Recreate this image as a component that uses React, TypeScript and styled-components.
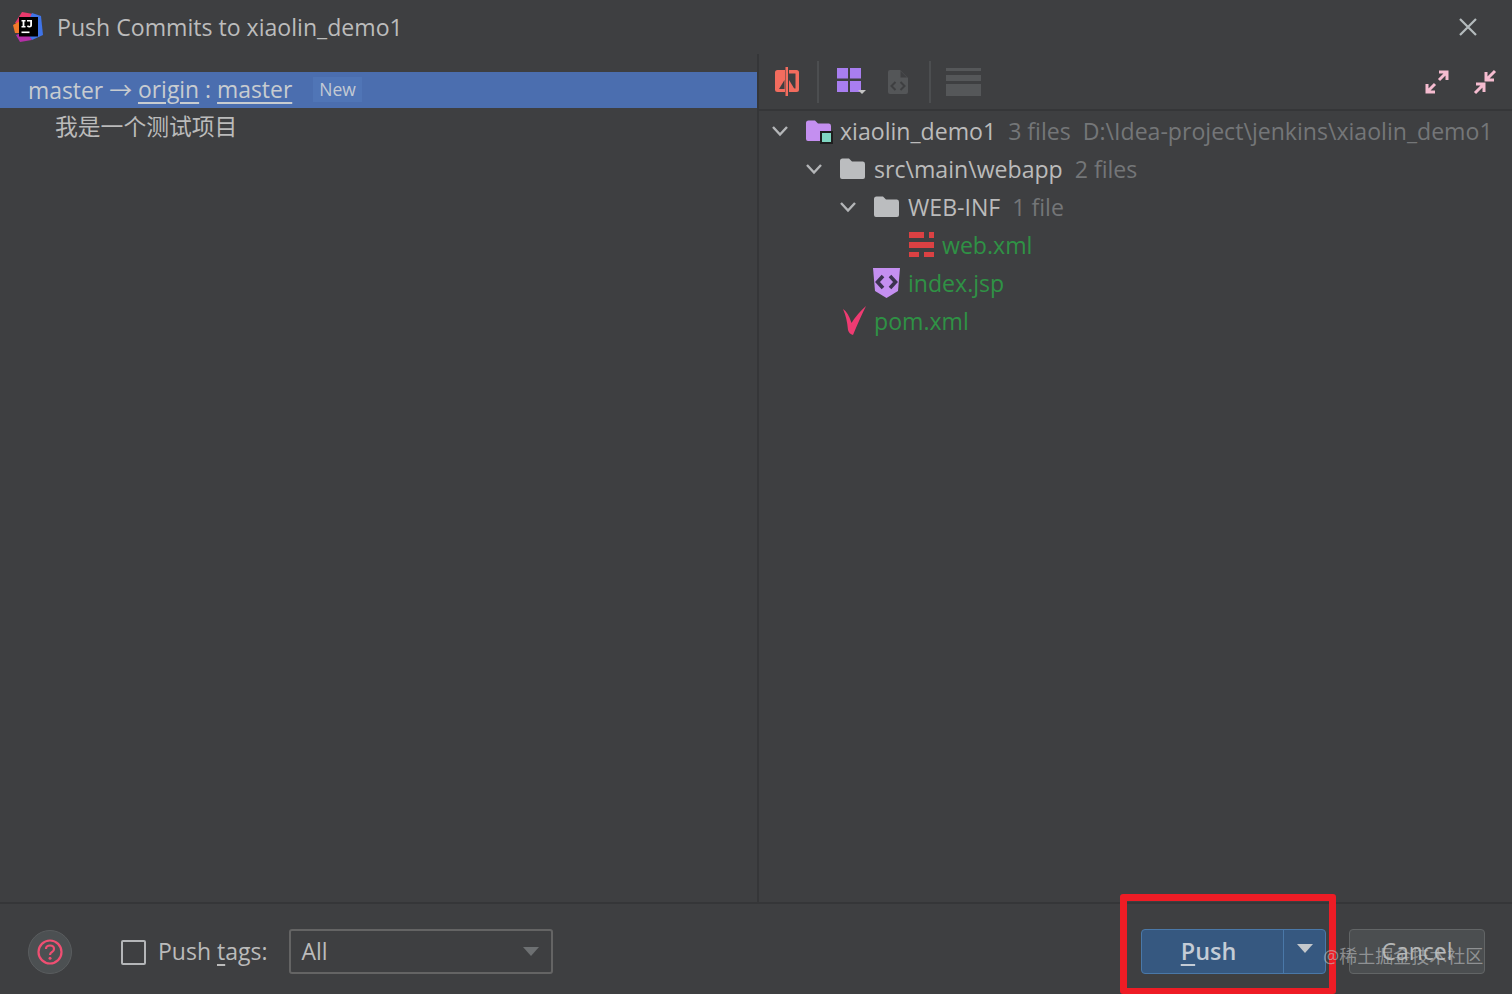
import React from "react";
import styled, { createGlobalStyle } from "styled-components";

const Global = createGlobalStyle`
  html, body { margin: 0; padding: 0; background: #3e3f41; }
  #root { width: 1512px; height: 994px; overflow: hidden; }
`;

const FONT = `"Open Sans", "Noto Sans CJK SC", sans-serif`;

const Dialog = styled.div`
  position: relative;
  width: 1512px;
  height: 994px;
  display: flex;
  flex-direction: column;
  background: #3e3f41;
  color: #bbbbbb;
  font-family: ${FONT};
  font-size: 23px;
  overflow: hidden;
`;

const TitleBar = styled.div`
  height: 54px;
  flex: none;
  display: flex;
  align-items: center;
  padding: 0 34px 0 12px;
  gap: 13px;
`;

const Title = styled.div`
  flex: 1;
  font-size: 23.1px;
  color: #bcbcbc;
  line-height: 54px;
`;

const Main = styled.div`
  flex: 1;
  min-height: 0;
  display: flex;
`;

const LeftPane = styled.div`
  width: 757px;
  flex: none;
  padding-top: 18px;
  border-right: 2px solid #353638;
`;

const BranchRow = styled.div`
  height: 36px;
  box-sizing: border-box;
  padding: 0 0 2px 28px;
  background: #4b6eaf;
  display: flex;
  align-items: center;
  color: #c8ccd0;
  font-size: 22.9px;
  white-space: pre;
`;

const Link = styled.span`
  text-decoration: underline;
  text-decoration-thickness: 2px;
  text-underline-offset: 4px;
`;

const Badge = styled.span`
  margin-left: 21px;
  padding: 0 6px;
  height: 25px;
  line-height: 25px;
  font-size: 17.5px;
  color: #c3cad4;
  background: #5075b6;
`;

const CommitRow = styled.div`
  height: 36px;
  box-sizing: border-box;
  padding: 0 0 2px 55px;
  display: flex;
  align-items: center;
  font-size: 22.8px;
  color: #bbbbbb;
`;

const RightPane = styled.div`
  flex: 1;
  min-width: 0;
  display: flex;
  flex-direction: column;
`;

const Toolbar = styled.div`
  height: 57px;
  flex: none;
  border-bottom: 2px solid #353638;
  box-sizing: border-box;
  display: flex;
  align-items: center;
  padding: 0 13px 0 15px;
`;

const ToolIcon = styled.span<{ $mr?: number }>`
  display: inline-flex;
  margin-right: ${(p) => p.$mr ?? 0}px;
`;

const ToolSep = styled.span<{ $mr: number }>`
  width: 2px;
  height: 42px;
  background: #4c4e50;
  margin-right: ${(p) => p.$mr}px;
`;

const Spacer = styled.span`
  flex: 1;
`;

const Tree = styled.div`
  padding-top: 1px;
`;

const TreeRow = styled.div<{ $indent: number }>`
  height: 38px;
  display: flex;
  align-items: center;
  padding-left: ${(p) => p.$indent}px;
  white-space: nowrap;
`;

const Chevron = styled.span`
  display: inline-flex;
  width: 34px;
  flex: none;
`;

const NodeIcon = styled.span<{ $w?: number }>`
  display: inline-flex;
  width: ${(p) => p.$w ?? 35}px;
  flex: none;
  justify-content: flex-start;
`;

const Name = styled.span<{ $added?: boolean }>`
  color: ${(p) => (p.$added ? "#2f9245" : "#bbbbbb")};
  font-size: 23.1px;
`;

const Meta = styled.span`
  color: #747678;
  font-size: 23.1px;
  margin-left: 12px;
`;

const Footer = styled.div`
  height: 92px;
  flex: none;
  box-sizing: border-box;
  border-top: 2px solid #353638;
  display: flex;
  align-items: center;
  padding: 4px 27px 0 28px;
`;

const HelpButton = styled.span`
  width: 42px;
  height: 42px;
  border-radius: 50%;
  background: #4c5052;
  border: 1px solid #5a5d5f;
  display: flex;
  align-items: center;
  justify-content: center;
  margin: 2px 49px 0 0;
`;

const CheckBox = styled.span`
  width: 21px;
  height: 21px;
  border: 2px solid #b4b6b8;
  border-radius: 2px;
  margin: 2px 12px 0 0;
  flex: none;
`;

const TagsLabel = styled.span`
  font-size: 23px;
  color: #bbbbbb;
  margin-right: 22px;
`;

const U = styled.span`
  text-decoration: underline;
  text-underline-offset: 4px;
`;

const Select = styled.div`
  width: 264px;
  height: 45px;
  box-sizing: border-box;
  border: 2px solid #646464;
  border-radius: 3px;
  display: flex;
  align-items: center;
  justify-content: space-between;
  padding: 0 12px 0 10px;
  font-size: 23px;
  color: #bbbbbb;
`;

const Caret = styled.span<{ $color: string }>`
  width: 0;
  height: 0;
  border-left: 8px solid transparent;
  border-right: 8px solid transparent;
  border-top: 9px solid ${(p) => p.$color};
`;

const SplitButton = styled.div`
  width: 185px;
  height: 45px;
  box-sizing: border-box;
  border: 1px solid #4a78a8;
  border-radius: 4px;
  background: #365880;
  display: flex;
  color: #c4ccd6;
  margin-right: 23px;
`;

const PushPart = styled.span`
  flex: 1;
  display: flex;
  align-items: center;
  justify-content: center;
  font-weight: 600;
  font-size: 23.4px;
  border-right: 1px solid #4a78a8;
  padding-right: 8px;
`;

const CaretPart = styled.span`
  width: 41px;
  display: flex;
  align-items: center;
  justify-content: center;
  padding-bottom: 6px;
`;

const CancelButton = styled.div`
  width: 136px;
  height: 45px;
  box-sizing: border-box;
  border: 1px solid #626566;
  border-radius: 4px;
  background: #4b4e50;
  color: #b4b6b6;
  display: flex;
  align-items: center;
  justify-content: center;
  font-size: 23px;
`;

const Highlight = styled.div`
  position: absolute;
  left: 1120px;
  top: 894px;
  width: 216px;
  height: 100px;
  box-sizing: border-box;
  border: 7px solid #ee1c25;
  border-bottom-width: 6px;
  border-radius: 3px;
`;

const Watermark = styled.div`
  position: absolute;
  left: 1323px;
  top: 944px;
  font-size: 18px;
  line-height: 24px;
  color: rgba(190, 192, 194, 0.62);
  white-space: nowrap;
`;

const AppLogo = () => (
  <svg width="32" height="32" viewBox="0 0 32 32">
    <path d="M10 1 L21 3 L18 14 L3 12 Z" fill="#e8396b" />
    <path d="M1 14 L8 10 L10 22 L3 22 Z" fill="#f27a2a" />
    <path d="M20 2 L29 5 L31 24 L20 29 L12 20 Z" fill="#3f74e8" />
    <path d="M4 24 L14 20 L20 29 L8 31 Z" fill="#b42fa6" />
    <rect x="7" y="6" width="19" height="19.5" fill="#000" />
    <path d="M9.5 9 H13.5 V10.5 H12.4 V15 H13.5 V16.5 H9.5 V15 H10.6 V10.5 H9.5 Z" fill="#fff" />
    <path d="M15 9 H20 V14.5 Q20 16.6 17.5 16.6 Q15.6 16.6 14.8 15.2 L16 14.2 Q16.6 15 17.4 15 Q18.2 15 18.2 14.2 V10.5 H15 Z" fill="#fff" />
    <rect x="9.5" y="20.5" width="8" height="1.6" fill="#fff" />
  </svg>
);

const CloseIcon = () => (
  <svg width="20" height="20" viewBox="0 0 20 20">
    <path d="M2 2 L18 18 M18 2 L2 18" stroke="#b4bbbd" strokeWidth="2.2" fill="none" />
  </svg>
);

const CompareIcon = () => (
  <svg width="26" height="30" viewBox="0 0 26 30">
    <path d="M11 3 H3.5 Q1 3 1 5.5 V22.5 Q1 25 3.5 25 H11 Z" fill="#f26c5e" />
    <path d="M15 3 H22.5 Q25 3 25 5.5 V22.5 Q25 25 22.5 25 H15 V21.5 H21.5 V6.5 H15 Z" fill="#f26c5e" />
    <rect x="11.5" y="0" width="2.5" height="29" fill="#f26c5e" />
    <path d="M10.5 13 L5 22 H10.5 Z" fill="#3e3f41" />
    <path d="M15 13 L20.5 22 H15 Z" fill="#f26c5e" />
  </svg>
);

const GridIcon = () => (
  <svg width="30" height="28" viewBox="0 0 30 28">
    <rect x="0" y="0" width="11" height="10.5" fill="#a87ef0" />
    <rect x="13" y="0" width="11" height="10.5" fill="#a87ef0" />
    <rect x="0" y="13" width="11" height="11" fill="#a87ef0" />
    <rect x="13" y="13" width="11" height="11" fill="#a87ef0" />
    <path d="M21 22 H29 L25 26 Z" fill="#c4c4c4" />
  </svg>
);

const FileCodeIcon = () => (
  <svg width="22" height="26" viewBox="0 0 22 26">
    <path d="M1 3 Q1 1 3 1 H13 L21 9 V23 Q21 25 19 25 H3 Q1 25 1 23 Z" fill="#545658" />
    <path d="M13.5 2 V8.5 H20 Z" fill="#3e3f41" />
    <path d="M8.5 13 L4.5 17 L8.5 21 M13.5 13 L17.5 17 L13.5 21" stroke="#3e3f41" strokeWidth="2" fill="none" />
  </svg>
);

const RowsIcon = () => (
  <svg width="36" height="28" viewBox="0 0 36 28">
    <rect x="0" y="0" width="35" height="3" fill="#555759" />
    <rect x="0" y="7" width="35" height="6" fill="#555759" />
    <rect x="0" y="16" width="35" height="12" fill="#555759" />
  </svg>
);

const Arrow = ({ d }: { d: string }) => <path d={d} stroke="#f5bcd0" strokeWidth="3" fill="none" />;

const ExpandIcon = () => (
  <svg width="26" height="26" viewBox="0 0 26 26">
    <Arrow d="M15 3 H23 V11 M23 3 L15 11" />
    <Arrow d="M3 15 V23 H11 M3 23 L11 15" />
  </svg>
);

const CollapseIcon = () => (
  <svg width="26" height="26" viewBox="0 0 26 26">
    <Arrow d="M13 3 V11 H21 M13 11 L22 2" />
    <Arrow d="M3 15 H11 V23 M11 15 L2 24" />
  </svg>
);

const ChevronDown = () => (
  <svg width="18" height="12" viewBox="0 0 18 12">
    <path d="M2 2 L9 9.5 L16 2" stroke="#b4b6b8" strokeWidth="2.4" fill="none" />
  </svg>
);

const FolderIcon = ({ color, badge }: { color: string; badge?: boolean }) => (
  <svg width="28" height="26" viewBox="0 0 28 26">
    <path d="M1 5 Q1 2.5 3.5 2.5 H10 L13 5.5 H24 Q26 5.5 26 8 V21 Q26 23 24 23 H3 Q1 23 1 21 Z" fill={color} />
    {badge && <rect x="16" y="14" width="11" height="11" fill="#7fd6c2" stroke="#1e1e1e" strokeWidth="2" />}
  </svg>
);

const XmlIcon = () => (
  <svg width="26" height="26" viewBox="0 0 26 26">
    <rect x="0" y="0" width="15" height="6" fill="#db4143" />
    <rect x="20" y="0" width="5" height="6" fill="#db4143" />
    <rect x="0" y="10" width="25" height="6" fill="#db4143" />
    <rect x="0" y="20" width="10" height="5" fill="#db4143" />
    <rect x="15" y="20" width="10" height="5" fill="#db4143" />
  </svg>
);

const JspIcon = () => (
  <svg width="28" height="32" viewBox="0 0 28 32">
    <path d="M0 1 H27 L25 24 L13.5 31 L2 24 Z" fill="#c48ff0" />
    <path d="M10 9 L4.5 15 L10 21 M17 9 L22.5 15 L17 21" stroke="#3c3350" strokeWidth="3.6" fill="none" />
  </svg>
);

const MavenIcon = () => (
  <svg width="24" height="30" viewBox="0 0 24 30">
    <path d="M0 3 Q5 6 8.5 17 Q14 8 23 0 Q17 12 10 29 Q6 28 5 24 Q4 12 0 3 Z" fill="#ef3b72" />
  </svg>
);

const HelpIcon = () => (
  <svg width="26" height="26" viewBox="0 0 26 26">
    <circle cx="13" cy="13" r="11.5" stroke="#ef4f72" strokeWidth="2.2" fill="none" />
    <path d="M9 10 Q9 6.5 13 6.5 Q17 6.5 17 10 Q17 12 15 13 Q13 14 13 16" stroke="#ef4f72" strokeWidth="2.2" fill="none" />
    <circle cx="13" cy="19.2" r="1.5" fill="#ef4f72" />
  </svg>
);

export default function App() {
  return (
    <Dialog>
      <Global />
      <TitleBar>
        <AppLogo />
        <Title>Push Commits to xiaolin_demo1</Title>
        <CloseIcon />
      </TitleBar>
      <Main>
        <LeftPane>
          <BranchRow>
            master → <Link>origin</Link> : <Link>master</Link>
            <Badge>New</Badge>
          </BranchRow>
          <CommitRow>我是一个测试项目</CommitRow>
        </LeftPane>
        <RightPane>
          <Toolbar>
            <ToolIcon $mr={17}><CompareIcon /></ToolIcon>
            <ToolSep $mr={18} />
            <ToolIcon $mr={20}><GridIcon /></ToolIcon>
            <ToolIcon $mr={20}><FileCodeIcon /></ToolIcon>
            <ToolSep $mr={15} />
            <RowsIcon />
            <Spacer />
            <ToolIcon $mr={23}><ExpandIcon /></ToolIcon>
            <CollapseIcon />
          </Toolbar>
          <Tree>
            <TreeRow $indent={12}>
              <Chevron><ChevronDown /></Chevron>
              <NodeIcon><FolderIcon color="#c48ff0" badge /></NodeIcon>
              <Name>xiaolin_demo1</Name>
              <Meta>3 files</Meta>
              <Meta>D:\Idea-project\jenkins\xiaolin_demo1</Meta>
            </TreeRow>
            <TreeRow $indent={46}>
              <Chevron><ChevronDown /></Chevron>
              <NodeIcon><FolderIcon color="#bbbdbf" /></NodeIcon>
              <Name>src\main\webapp</Name>
              <Meta>2 files</Meta>
            </TreeRow>
            <TreeRow $indent={80}>
              <Chevron><ChevronDown /></Chevron>
              <NodeIcon><FolderIcon color="#bbbdbf" /></NodeIcon>
              <Name>WEB-INF</Name>
              <Meta>1 file</Meta>
            </TreeRow>
            <TreeRow $indent={150}>
              <NodeIcon $w={33}><XmlIcon /></NodeIcon>
              <Name $added>web.xml</Name>
            </TreeRow>
            <TreeRow $indent={114}>
              <NodeIcon><JspIcon /></NodeIcon>
              <Name $added>index.jsp</Name>
            </TreeRow>
            <TreeRow $indent={84}>
              <NodeIcon $w={31}><MavenIcon /></NodeIcon>
              <Name $added>pom.xml</Name>
            </TreeRow>
          </Tree>
        </RightPane>
      </Main>
      <Footer>
        <HelpButton><HelpIcon /></HelpButton>
        <CheckBox />
        <TagsLabel>Push <U>t</U>ags:</TagsLabel>
        <Select>
          All
          <Caret $color="#6d7072" />
        </Select>
        <Spacer />
        <SplitButton>
          <PushPart><span><U>P</U>ush</span></PushPart>
          <CaretPart><Caret $color="#c4c8cc" /></CaretPart>
        </SplitButton>
        <CancelButton>Cancel</CancelButton>
      </Footer>
      <Highlight />
      <Watermark>@稀土掘金技术社区</Watermark>
    </Dialog>
  );
}
